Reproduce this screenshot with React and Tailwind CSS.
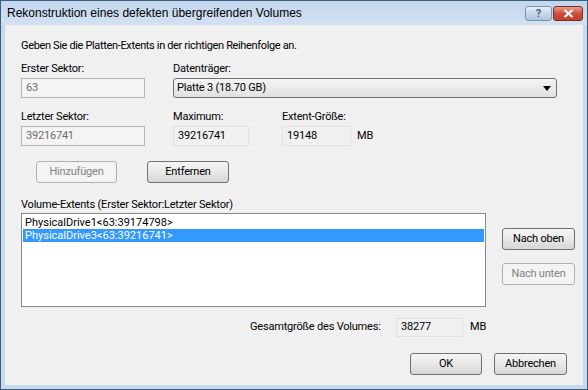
import React from "react";

const btn =
  "flex shrink-0 items-center justify-center rounded-[3px] border h-[22px] text-[11px] bg-gradient-to-b";
const btnOn = "border-[#707070] from-[#f6f6f6] via-[#e8e8e8] to-[#d6d6d6] text-black";
const btnOff = "border-[#adb2b5] from-[#f4f4f4] to-[#f4f4f4] text-[#838383]";

function Button({ label, width, disabled }) {
  return (
    <div className={`${btn} ${disabled ? btnOff : btnOn}`} style={{ width }}>
      {label}
    </div>
  );
}

function ReadBox({ value, width, height = 20 }) {
  return (
    <div
      className="flex shrink-0 items-center border border-[#e2e2e2] bg-[#f0f0f0] pl-[4px] text-black"
      style={{ width, height }}
    >
      {value}
    </div>
  );
}

export default function App() {
  return (
    <div className="flex h-[390px] w-[588px] flex-col border border-[#3d5d7c] bg-[#c7d9ec] font-['Roboto',sans-serif] text-[11px] tracking-[-0.2px] text-black">
      {/* title bar */}
      <div className="flex h-[24px] items-center bg-gradient-to-b from-[#c2d6ec] to-[#d3e2f2] pl-[6px] pr-[4px]">
        <span className="font-['Liberation_Sans',sans-serif] text-[12px] tracking-normal">
          Rekonstruktion eines defekten übergreifenden Volumes
        </span>
        <div className="ml-auto flex gap-[1px]">
          <div className="flex h-[15px] w-[27px] items-center justify-center rounded-[3px] border border-[#7a94b0] bg-gradient-to-b from-[#e6eef7] via-[#c7d7e8] to-[#b2c6dc] text-[11px] font-bold leading-none text-[#4a5f78]">
            ?
          </div>
          <div className="flex h-[15px] w-[30px] items-center justify-center rounded-[3px] border border-[#7a2a20] bg-gradient-to-b from-[#e8a08f] via-[#c9503c] to-[#c4402b]">
            <svg width="11" height="9" viewBox="0 0 11 9">
              <path d="M1.5 1 L9.5 8 M9.5 1 L1.5 8" stroke="#fff" strokeWidth="2.2" />
            </svg>
          </div>
        </div>
      </div>

      {/* client area */}
      <div className="mx-[4px] mb-[4px] flex flex-1 flex-col bg-[#f0f0f0] pl-[16px] pr-[16px]">
        <div className="mt-[13px] h-[15px] leading-[15px] tracking-[-0.35px]">
          Geben Sie die Platten-Extents in der richtigen Reihenfolge an.
        </div>

        <div className="mt-[8px] flex h-[15px] leading-[15px]">
          <div className="w-[152px] shrink-0">Erster Sektor:</div>
          <div>Datenträger:</div>
        </div>
        <div className="mt-[2px] flex">
          <div className="w-[152px] shrink-0">
            <div className="flex h-[20px] w-[124px] items-center border border-[#b5b5b5] bg-[#f4f4f4] pl-[4px] text-[#6d6d6d]">
              63
            </div>
          </div>
          <div className="flex h-[20px] w-[384px] shrink-0 items-center justify-between rounded-[3px] border border-[#707070] bg-gradient-to-b from-[#f4f4f4] to-[#e1e1e1] pl-[3px] pr-[5px]">
            <span>Platte 3 (18.70 GB)</span>
            <svg width="8" height="5" viewBox="0 0 8 5">
              <path d="M0 0 H8 L4 5 Z" fill="#000" />
            </svg>
          </div>
        </div>

        <div className="mt-[11px] flex h-[15px] leading-[15px]">
          <div className="w-[152px] shrink-0">Letzter Sektor:</div>
          <div className="w-[109px] shrink-0">Maximum:</div>
          <div>Extent-Größe:</div>
        </div>
        <div className="mt-[2px] flex items-center">
          <div className="w-[152px] shrink-0">
            <div className="flex h-[20px] w-[124px] items-center border border-[#b5b5b5] bg-[#f4f4f4] pl-[4px] text-[#6d6d6d]">
              39216741
            </div>
          </div>
          <div className="w-[109px] shrink-0">
            <ReadBox value="39216741" width={76} />
          </div>
          <ReadBox value="19148" width={69} />
          <span className="ml-[6px]">MB</span>
        </div>

        <div className="mt-[15px] ml-[15px] flex gap-[30px]">
          <Button label="Hinzufügen" width={81} disabled />
          <Button label="Entfernen" width={82} />
        </div>

        <div className="mt-[14px] h-[15px] leading-[15px]">
          Volume-Extents (Erster Sektor:Letzter Sektor)
        </div>
        <div className="mt-[1px] flex">
          <div className="h-[94px] w-[465px] shrink-0 border border-[#828790] bg-white p-[1px] pt-[2px] tracking-normal">
            <div className="h-[13px] pl-[2px] leading-[13px]">PhysicalDrive1&lt;63:39174798&gt;</div>
            <div className="h-[13px] bg-[#3399ff] pl-[2px] leading-[13px] text-white">
              PhysicalDrive3&lt;63:39216741&gt;
            </div>
          </div>
          <div className="ml-[16px] flex shrink-0 flex-col gap-[13px] pt-[15px]">
            <Button label="Nach oben" width={73} />
            <Button label="Nach unten" width={73} disabled />
          </div>
        </div>

        <div className="mt-[11px] flex items-center">
          <div className="ml-[229px] w-[146px] shrink-0">Gesamtgröße des Volumes:</div>
          <ReadBox value="38277" width={67} height={19} />
          <span className="ml-[7px]">MB</span>
        </div>

        <div className="mt-[16px] flex justify-end gap-[12px]">
          <Button label="OK" width={72} />
          <Button label="Abbrechen" width={73} />
        </div>
      </div>
    </div>
  );
}
